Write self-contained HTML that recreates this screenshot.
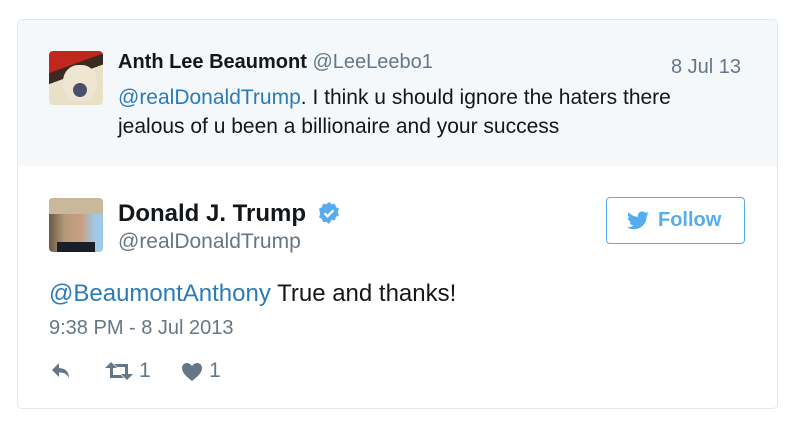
<!DOCTYPE html>
<html><head><style>
body{margin:0;background:#fff;width:799px;height:433px;overflow:hidden;font-family:"Liberation Sans",sans-serif;}
.card{position:absolute;left:17px;top:19px;width:759px;height:388px;border:1px solid #e1e8ed;border-radius:5px;overflow:hidden;}
.q{position:absolute;left:0;top:0;width:759px;height:146px;background:#f5f8fa;}
.av{position:absolute;border-radius:4px;overflow:hidden;}
.t{position:absolute;white-space:nowrap;}
.link{color:#2b7bb9}
.grey{color:#657786}
</style></head><body>
<div class="card">
<div class="q"></div>
<div class="av" style="left:31px;top:31px;width:54px;height:54px;background:linear-gradient(160deg,#c0281e 0 30%,#3a2a22 30% 45%,#e9e0c8 45%);">
<div style="position:absolute;left:14px;top:14px;width:34px;height:36px;border-radius:45%;background:#efe6d2"></div>
<div style="position:absolute;left:24px;top:32px;width:14px;height:14px;border-radius:50%;background:#4a4f6a"></div>
</div>
<div class="t" style="left:100px;top:31px;font-size:20px;color:#14171a"><b>Anth Lee Beaumont</b> <span class="grey" style="font-size:20px">@LeeLeebo1</span></div>
<div class="t grey" style="left:653px;top:36px;font-size:20px">8 Jul 13</div>
<div class="t" style="left:100px;top:63px;font-size:21px;line-height:29px;color:#14171a"><span class="link">@realDonaldTrump</span>. I think u should ignore the haters there<br>jealous of u been a billionaire and your success</div>

<div class="av" style="left:31px;top:178px;width:54px;height:54px;background:linear-gradient(90deg,#6a5a48,#b79a7a 30%,#c99f82 60%,#9ec9e8 85%);">
<div style="position:absolute;left:0;top:0;width:54px;height:16px;background:#c9b99a"></div>
<div style="position:absolute;left:8px;top:44px;width:38px;height:10px;background:#1a1e28"></div>
</div>
<div class="t" style="left:100px;top:180px;font-size:24px;font-weight:bold;color:#14171a">Donald J. Trump</div>
<svg style="position:absolute;left:299px;top:181px" width="24" height="24" viewBox="0 0 24 24"><path fill="#55acee" d="M12 1l2.6 2.2 3.4-.4 1 3.3 3 1.6-1.2 3.3 1.2 3.3-3 1.6-1 3.3-3.4-.4L12 23l-2.6-2.2-3.4.4-1-3.3-3-1.6 1.2-3.3L2 7.7l3-1.6 1-3.3 3.4.4z"/><path d="M7.5 12.2l3 3 6-6" stroke="#fff" stroke-width="2.4" fill="none"/></svg>
<div class="t grey" style="left:100px;top:210px;font-size:21px">@realDonaldTrump</div>
<div style="position:absolute;left:588px;top:177px;width:137px;height:45px;border:1px solid #55acee;border-radius:4px;"></div>
<svg style="position:absolute;left:609px;top:191px" width="22" height="19" viewBox="0 0 24 20"><path fill="#55acee" d="M24 2.4c-.9.4-1.8.7-2.8.8 1-.6 1.8-1.6 2.2-2.7-1 .6-2 1-3.1 1.2C19.3.7 18 0 16.6 0c-2.7 0-4.9 2.2-4.9 4.9 0 .4 0 .8.1 1.1C7.7 5.8 4.1 3.9 1.7.9c-.4.7-.7 1.6-.7 2.5 0 1.7.9 3.2 2.2 4.1-.8 0-1.6-.2-2.2-.6v.1c0 2.4 1.7 4.4 3.9 4.8-.4.1-.8.2-1.3.2-.3 0-.6 0-.9-.1.6 2 2.4 3.4 4.6 3.4-1.7 1.3-3.8 2.1-6.1 2.1-.4 0-.8 0-1.2-.1 2.2 1.4 4.8 2.2 7.5 2.2 9.1 0 14-7.5 14-14v-.6c1-.7 1.8-1.6 2.5-2.5z"/></svg>
<div class="t" style="left:640px;top:189px;font-size:20px;font-weight:bold;color:#55acee">Follow</div>
<div class="t" style="left:31px;top:260px;font-size:24px;color:#14171a"><span class="link">@BeaumontAnthony</span> True and thanks!</div>
<div class="t grey" style="left:31px;top:297px;font-size:20px">9:38 PM - 8 Jul 2013</div>
<svg style="position:absolute;left:33px;top:342px" width="22" height="18" viewBox="0 0 22 18"><path fill="#657786" d="M8 1L1 8l7 7v-4.5c5 0 8 1.5 10 5.5 0-6-3-9.5-10-10V1z"/></svg>
<svg style="position:absolute;left:87px;top:341px" width="28" height="20" viewBox="0 0 28 20"><path fill="#657786" d="M6 1l6 6H8v7h8l3 3H5V7H0zM22 19l-6-6h4V6h-8L9 3h14v10h5z"/></svg>
<div class="t grey" style="left:121px;top:339px;font-size:21px">1</div>
<svg style="position:absolute;left:163px;top:342px" width="22" height="20" viewBox="0 0 22 20"><path fill="#657786" d="M11 19C6 15 1 11 1 6c0-3 2.3-5 5-5 2 0 3.6 1.2 5 3 1.4-1.8 3-3 5-3 2.7 0 5 2 5 5 0 5-5 9-10 13z"/></svg>
<div class="t grey" style="left:191px;top:339px;font-size:21px">1</div>
</div>
</body></html>
